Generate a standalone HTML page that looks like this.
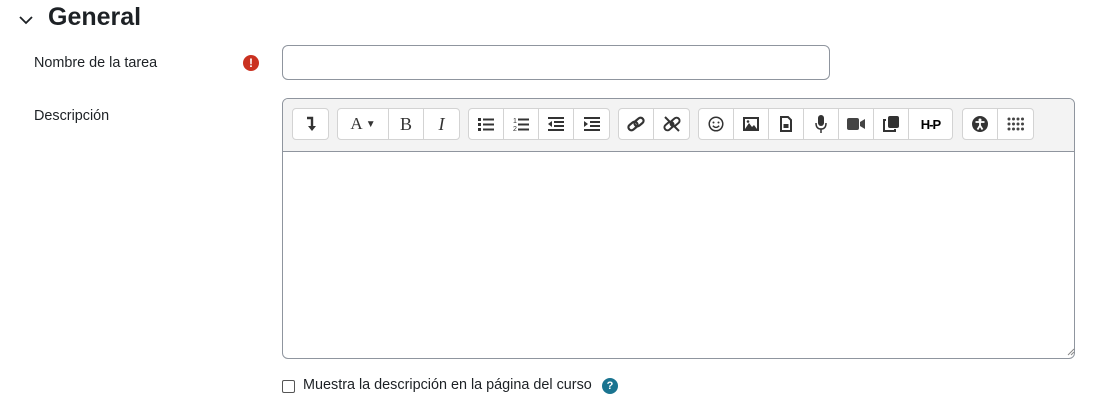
<!DOCTYPE html>
<html><head><meta charset="utf-8"><style>
body{margin:0;width:1104px;height:404px;background:#fff;font-family:"Liberation Sans",sans-serif;color:#1d2125;position:relative;overflow:hidden}
.abs{position:absolute}
.grp{position:absolute;top:108px;height:32px;border:1px solid #d3d3d3;border-radius:4px;background:#fff;display:flex;box-sizing:border-box}
.b{width:35px;height:30px;display:flex;align-items:center;justify-content:center;border-right:1px solid #d3d3d3;box-sizing:border-box}
.b:last-child{border-right:none}
svg{display:block}
</style></head><body>
<svg class="abs" style="left:18px;top:14px" width="16" height="12" viewBox="0 0 16 12"><path d="M2 3 L8 9 L14 3" fill="none" stroke="#1d2125" stroke-width="1.8"/></svg>
<div class="abs" style="left:48px;top:3px;font-size:25px;font-weight:bold;">General</div>
<div class="abs" style="left:34px;top:55px;font-size:14.4px">Nombre de la tarea</div>
<div class="abs" style="left:243px;top:55px;width:16px;height:16px;border-radius:50%;background:#ca3120;color:#fff;font-size:12px;font-weight:bold;text-align:center;line-height:16px">!</div>
<div class="abs" style="left:282px;top:45px;width:548px;height:35px;border:1px solid #8f959e;border-radius:6px;box-sizing:border-box"></div>
<div class="abs" style="left:34px;top:108px;font-size:14.4px">Descripción</div>
<div class="abs" style="left:282px;top:98px;width:793px;height:261px;border:1px solid #8f959e;border-radius:6px;box-sizing:border-box;overflow:hidden">
 <div style="height:52px;background:#f3f3f3;border-bottom:1px solid #8f959e"></div>
</div>
<div class="grp" style="left:292px"><div class="b"><svg width="12" height="16" viewBox="0 0 12 16"><path d="M2 2 H7 V12" fill="none" stroke="#333" stroke-width="2.4"/><path d="M3 10 L7 15 L11 10Z" fill="#333"/></svg></div></div>
<div class="grp" style="left:337px"><div class="b" style="width:51px;font-family:'Liberation Serif',serif;font-size:17px;color:#333">A<span style="font-size:10px;margin-left:3px">▼</span></div><div class="b" style="font-family:'Liberation Serif',serif;font-size:18px;color:#333">B</div><div class="b" style="font-family:'Liberation Serif',serif;font-style:italic;font-size:18px;color:#333">I</div></div>
<div class="grp" style="left:468px">
<div class="b"><svg width="16" height="14"><g fill="#333"><rect x="0" y="1" width="3" height="3"/><rect x="0" y="6" width="3" height="3"/><rect x="0" y="11" width="3" height="3"/><rect x="5" y="1.5" width="11" height="2"/><rect x="5" y="6.5" width="11" height="2"/><rect x="5" y="11.5" width="11" height="2"/></g></svg></div>
<div class="b"><svg width="16" height="14"><g fill="#333"><text x="0" y="6" font-size="7" font-family="Liberation Sans">1</text><text x="0" y="14" font-size="7" font-family="Liberation Sans">2</text><rect x="5" y="1.5" width="11" height="2"/><rect x="5" y="6.5" width="11" height="2"/><rect x="5" y="11.5" width="11" height="2"/></g></svg></div>
<div class="b"><svg width="16" height="14"><g fill="#333"><rect x="0" y="0" width="16" height="2"/><rect x="6" y="4" width="10" height="2"/><rect x="6" y="8" width="10" height="2"/><rect x="0" y="12" width="16" height="2"/><path d="M0 7 L4 4 V10Z"/></g></svg></div>
<div class="b"><svg width="16" height="14"><g fill="#333"><rect x="0" y="0" width="16" height="2"/><rect x="6" y="4" width="10" height="2"/><rect x="6" y="8" width="10" height="2"/><rect x="0" y="12" width="16" height="2"/><path d="M4 7 L0 4 V10Z"/></g></svg></div>
</div>
<div class="grp" style="left:618px">
<div class="b"><svg width="18" height="16"><g fill="none" stroke="#333" stroke-width="2.2"><rect x="1" y="7" width="10" height="6" rx="3" transform="rotate(-40 6 10)"/><rect x="7" y="3" width="10" height="6" rx="3" transform="rotate(-40 12 6)"/></g></svg></div>
<div class="b"><svg width="18" height="16"><g fill="none" stroke="#333" stroke-width="2"><rect x="1" y="7" width="10" height="6" rx="3" transform="rotate(-40 6 10)"/><rect x="7" y="3" width="10" height="6" rx="3" transform="rotate(-40 12 6)"/><path d="M2 1 L16 15"/></g></svg></div>
</div>
<div class="grp" style="left:698px">
<div class="b"><svg width="16" height="16"><circle cx="8" cy="8" r="6.8" fill="none" stroke="#333" stroke-width="1.5"/><circle cx="5.5" cy="6.5" r="1" fill="#333"/><circle cx="10.5" cy="6.5" r="1" fill="#333"/><path d="M4.8 9.8 Q8 13 11.2 9.8" fill="none" stroke="#333" stroke-width="1.4"/></svg></div>
<div class="b"><svg width="16" height="14"><rect x="1" y="1" width="14" height="12" fill="none" stroke="#333" stroke-width="2"/><path d="M2 12 L6 6 L9 10 L11 8 L14 12Z" fill="#333"/><circle cx="5" cy="4.5" r="1.3" fill="#333"/></svg></div>
<div class="b"><svg width="12" height="16"><path d="M1 1 H8 L11 4 V15 H1Z" fill="none" stroke="#333" stroke-width="2"/><rect x="3.5" y="8" width="5" height="4" fill="#333"/></svg></div>
<div class="b"><svg width="12" height="18"><rect x="3" y="0" width="6" height="11" rx="3" fill="#333"/><path d="M1 8 Q1 14 6 14 Q11 14 11 8 M6 14 V18" fill="none" stroke="#333" stroke-width="1.5"/></svg></div>
<div class="b"><svg width="18" height="12"><rect x="0" y="0" width="12" height="12" rx="2" fill="#444"/><path d="M13 4 L18 1 V11 L13 8Z" fill="#444"/></svg></div>
<div class="b"><svg width="16" height="16"><rect x="5" y="0" width="11" height="12" rx="2" fill="#333"/><path d="M3 4 H1 V15 H12 V13" fill="none" stroke="#333" stroke-width="2"/></svg></div>
<div class="b" style="width:43px;font-weight:bold;font-size:13px;color:#000;letter-spacing:-1px">H‑P</div>
</div>
<div class="grp" style="left:962px">
<div class="b"><svg width="16" height="16"><circle cx="8" cy="8" r="8" fill="#333"/><circle cx="8" cy="4" r="1.5" fill="#fff"/><path d="M3.5 6 H12.5 M8 6 V10 M8 9.5 L5.5 13.5 M8 9.5 L10.5 13.5" stroke="#fff" stroke-width="1.8" fill="none"/></svg></div>
<div class="b"><svg width="18" height="14"><g fill="#444"><circle cx="2" cy="2" r="1.5"/><circle cx="6.5" cy="2" r="1.5"/><circle cx="11" cy="2" r="1.5"/><circle cx="15.5" cy="2" r="1.5"/><circle cx="2" cy="7" r="1.5"/><circle cx="6.5" cy="7" r="1.5"/><circle cx="11" cy="7" r="1.5"/><circle cx="15.5" cy="7" r="1.5"/><circle cx="2" cy="12" r="1.5"/><circle cx="6.5" cy="12" r="1.5"/><circle cx="11" cy="12" r="1.5"/><circle cx="15.5" cy="12" r="1.5"/></g></svg></div>
</div>
<svg class="abs" style="right:29px;top:348px" width="8" height="8"><path d="M7 1 L1 7 M7 4 L4 7" stroke="#888" stroke-width="1"/></svg>
<div class="abs" style="left:282px;top:380px;width:13px;height:13px;border:1px solid #555;border-radius:2px;box-sizing:border-box"></div>
<div class="abs" style="left:303px;top:377px;font-size:14.4px">Muestra la descripción en la página del curso</div>
<div class="abs" style="left:602px;top:378px;width:16px;height:16px;border-radius:50%;background:#1a7490;color:#fff;font-size:11px;font-weight:bold;text-align:center;line-height:16px">?</div>
</body></html>
